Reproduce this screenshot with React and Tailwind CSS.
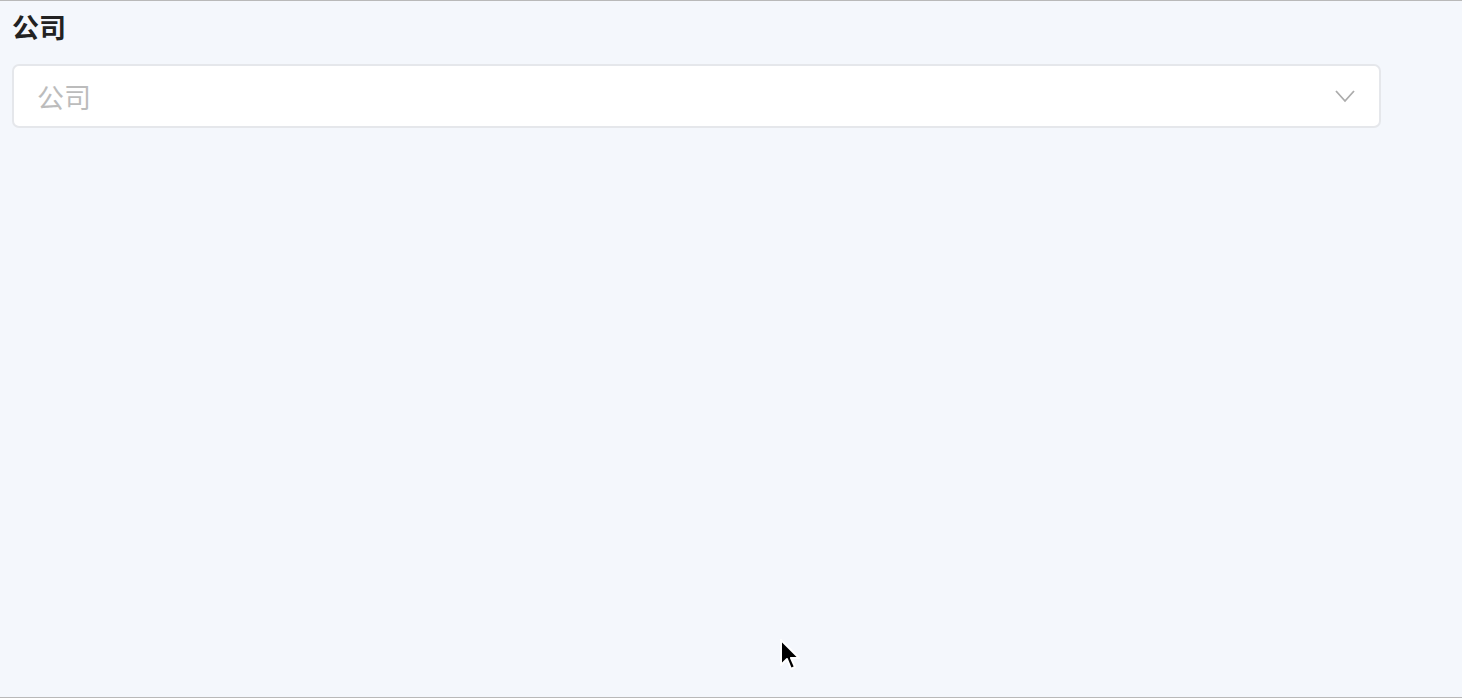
import React from "react";

export default function App() {
  return (
    <div
      className="relative h-[698px] w-full overflow-hidden border-t border-b border-[#b9b9b9] bg-[#f4f7fc]"
      style={{ fontFamily: '"Noto Sans CJK SC", "Noto Sans", sans-serif' }}
    >
      <div className="pl-3 pr-[81px] pt-[6px]">
        <div className="text-[27px] font-bold leading-[40px] text-[#222]">公司</div>
        <div className="mt-[17px] flex h-[64px] items-center justify-between rounded-[7px] border-2 border-[#e5e7eb] bg-white pl-[23px] pr-[23px]">
          <span className="text-[27px] leading-none text-[#bcbcbc]">公司</span>
          <svg width="22" height="14" viewBox="0 0 22 14" fill="none">
            <path d="M2 2 L11 12 L20 2" stroke="#acacac" strokeWidth="1.8" />
          </svg>
        </div>
      </div>
      <svg
        className="absolute left-[779px] top-[638px]"
        width="26"
        height="36"
        viewBox="0 0 26 36"
      >
        <path
          d="M2 1 L2 26 L8 20 L12 30 L16 28 L12 19 L20 19 Z"
          fill="#000"
          stroke="#fff"
          strokeWidth="2"
          strokeLinejoin="round"
        />
      </svg>
    </div>
  );
}
